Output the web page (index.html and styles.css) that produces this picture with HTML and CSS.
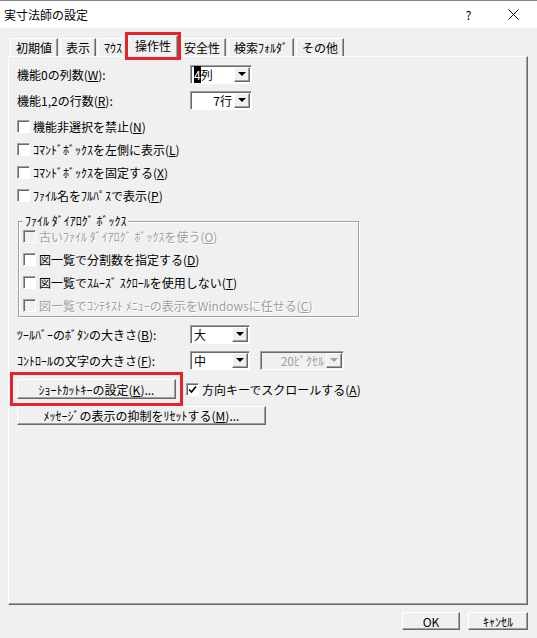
FILE: index.html
```html
<!DOCTYPE html>
<html lang="ja">
<head>
  <meta charset="UTF-8">
  <title>実寸法師の設定</title>
  <link rel="stylesheet" href="styles.css">
</head>
<body>
  <div class="titlebar">
    <span class="title">実寸法師の設定</span>
    <span class="tb-btn">?</span>
    <span class="tb-btn">
      <svg width="11" height="11" viewBox="0 0 11 11"><path d="M0.5 0.5L10.5 10.5M10.5 0.5L0.5 10.5" stroke="#000" stroke-width="1"/></svg>
    </span>
  </div>

  <!-- タブ -->
  <div class="tabs">
    <div class="tab">初期値</div>
    <div class="tab">表示</div>
    <div class="tab">ﾏｳｽ</div>
    <div class="tab active">操作性</div>
    <div class="tab">安全性</div>
    <div class="tab">検索ﾌｫﾙﾀﾞ</div>
    <div class="tab">その他</div>
  </div>

  <div class="panel">
    <div class="field r1">
      <span class="label">機能0の列数(<u>W</u>):</span>
      <div class="select wide"><span class="val"><span class="hl">4</span>列</span><span class="arrow"><i></i></span></div>
    </div>
    <div class="field r2">
      <span class="label">機能1,2の行数(<u>R</u>):</span>
      <div class="select wide"><span class="val right">7行</span><span class="arrow"><i></i></span></div>
    </div>

    <div class="check first"><span class="box"></span>機能非選択を禁止(<u>N</u>)</div>
    <div class="check"><span class="box"></span>ｺﾏﾝﾄﾞﾎﾞｯｸｽを左側に表示(<u>L</u>)</div>
    <div class="check"><span class="box"></span>ｺﾏﾝﾄﾞﾎﾞｯｸｽを固定する(<u>X</u>)</div>
    <div class="check"><span class="box"></span>ﾌｧｲﾙ名をﾌﾙﾊﾟｽで表示(<u>P</u>)</div>

    <div class="group">
      <span class="group-title">ﾌｧｲﾙ ﾀﾞｲｱﾛｸﾞ ﾎﾞｯｸｽ</span>
      <div class="check disabled"><span class="box"></span>古いﾌｧｲﾙ ﾀﾞｲｱﾛｸﾞ ﾎﾞｯｸｽを使う(<u>O</u>)</div>
      <div class="check"><span class="box"></span>図一覧で分割数を指定する(<u>D</u>)</div>
      <div class="check"><span class="box"></span>図一覧でｽﾑｰｽﾞ ｽｸﾛｰﾙを使用しない(<u>T</u>)</div>
      <div class="check disabled"><span class="box"></span>図一覧でｺﾝﾃｷｽﾄ ﾒﾆｭｰの表示をWindowsに任せる(<u>C</u>)</div>
    </div>

    <div class="field r3">
      <span class="label">ﾂｰﾙﾊﾞｰのﾎﾞﾀﾝの大きさ(<u>B</u>):</span>
      <div class="select"><span class="val">大</span><span class="arrow"><i></i></span></div>
    </div>
    <div class="field r4">
      <span class="label">ｺﾝﾄﾛｰﾙの文字の大きさ(<u>F</u>):</span>
      <div class="select"><span class="val">中</span><span class="arrow"><i></i></span></div>
      <div class="select off"><span class="val right">20ﾋﾟｸｾﾙ</span><span class="arrow"><i></i></span></div>
    </div>

    <div class="field r5">
      <button class="btn shortcut">ｼｮｰﾄｶｯﾄｷｰの設定(<u>K</u>)...</button>
      <div class="check on"><span class="box">
        <svg width="9" height="9" viewBox="0 0 9 9"><path d="M1 4.5L3.5 7L8 1.5" fill="none" stroke="#000" stroke-width="1.6"/></svg>
      </span>方向キーでスクロールする(<u>A</u>)</div>
    </div>
    <div class="field r6">
      <button class="btn reset">ﾒｯｾｰｼﾞの表示の抑制をﾘｾｯﾄする(<u>M</u>)...</button>
    </div>
  </div>

  <div class="footer">
    <button class="btn ok">OK</button>
    <button class="btn cancel">ｷｬﾝｾﾙ</button>
  </div>
</body>
</html>
```

FILE: styles.css
```css
body {
  margin: 0;
  background-color: #f0f0f0;
  font-family: "Noto Sans CJK JP", "Liberation Sans", sans-serif;
  font-size: 12px;
  color: #000;
}

u {
  text-underline-offset: 1px;
}

/* タイトルバー */
.titlebar {
  height: 27px;
  background-color: #fff;
  border-top: 1px solid #8a8a8a;
  display: flex;
  align-items: center;
  padding-left: 4px;
  padding-right: 1px;
}
.title {
  flex: 1;
  font-size: 12px;
}
.tb-btn {
  width: 45px;
  height: 27px;
  display: flex;
  align-items: center;
  justify-content: center;
  font-size: 12px;
}

/* タブ */
.tabs {
  height: 28px;
  display: flex;
  align-items: flex-end;
  padding-left: 10px;
  box-sizing: border-box;
}
.tab {
  height: 18px;
  line-height: 17px;
  padding: 0 5px;
  margin-right: 2px;
  box-sizing: border-box;
  border-top: 1px solid #fff;
  border-left: 1px solid #fff;
  border-right: 1px solid #696969;
  box-shadow: inset -1px 0 0 #a0a0a0;
  font-size: 12px;
  white-space: nowrap;
}
.tab.active {
  height: 22px;
  line-height: 20px;
  margin: 0 0 -1px -2px;
  padding: 0 6px;
  background-color: #f0f0f0;
  position: relative;
  z-index: 1;
  outline: 3px solid #e8212b;
}
.tab.active + .tab {
  margin-left: 0;
}

/* パネル */
.panel {
  margin-left: 8px;
  width: 520px;
  height: 549px;
  box-sizing: border-box;
  border-top: 1px solid #fff;
  border-left: 1px solid #fff;
  border-right: 1px solid #696969;
  border-bottom: 1px solid #696969;
  box-shadow: inset -1px -1px 0 #a0a0a0;
  padding-left: 8px;
}

.field {
  display: flex;
  align-items: center;
  height: 20px;
  white-space: nowrap;
}
.field .label {
  width: 173px;
}
.r1 { margin-top: 7px; }
.r2 { margin-top: 6px; }
.r3 { margin-top: 7px; }
.r4 { margin-top: 6px; }
.r5 { margin-top: 9px; }
.r6 { margin-top: 7px; height: 19px; }

/* コンボボックス */
.select {
  display: flex;
  width: 60px;
  height: 19px;
  box-sizing: border-box;
  background-color: #fff;
  border: 1px solid;
  border-color: #a0a0a0 #fff #fff #a0a0a0;
  box-shadow: inset 1px 1px 0 #696969;
}
.select.wide {
  width: 62px;
}
.select .val {
  flex: 1;
  padding: 0 2px 0 3px;
  line-height: 16px;
  margin-top: 1px;
}
.select .val.right {
  text-align: right;
}
.select .hl {
  background-color: #000;
  color: #fff;
}
.select .arrow {
  width: 16px;
  height: 15px;
  margin: 1px 1px 0 0;
  box-sizing: border-box;
  background-color: #f0f0f0;
  border: 1px solid;
  border-color: #fff #696969 #696969 #fff;
  box-shadow: inset -1px -1px 0 #a0a0a0;
  display: flex;
  align-items: center;
  justify-content: center;
}
.select .arrow i {
  width: 0;
  height: 0;
  border-left: 4px solid transparent;
  border-right: 4px solid transparent;
  border-top: 4px solid #000;
}
.select.off {
  width: 84px;
  margin-left: 10px;
  background-color: #f0f0f0;
  color: #a0a0a0;
}
.select.off .arrow i {
  border-top-color: #a0a0a0;
}

/* チェックボックス */
.check {
  display: flex;
  align-items: center;
  height: 20px;
  margin-top: 3px;
  white-space: nowrap;
}
.check.first {
  margin-top: 6px;
}
.check .box {
  width: 13px;
  height: 13px;
  box-sizing: border-box;
  margin-right: 3px;
  background-color: #fff;
  border: 1px solid;
  border-color: #a0a0a0 #fff #fff #a0a0a0;
  box-shadow: inset 1px 1px 0 #696969;
  display: flex;
  align-items: center;
  justify-content: center;
}
.check.disabled {
  color: #a0a0a0;
  text-shadow: 1px 1px 0 #fff;
}
.check.disabled .box {
  background-color: #f0f0f0;
}
.check.on {
  margin: 0 0 0 10px;
}

/* グループボックス */
.group {
  position: relative;
  margin: 16px 0 0 1px;
  width: 341px;
  height: 96px;
  box-sizing: border-box;
  border: 1px solid #a0a0a0;
  box-shadow: inset 1px 1px 0 #fff, 1px 1px 0 #fff;
  padding: 1px 0 0 4px;
}
.group-title {
  position: absolute;
  top: -8px;
  left: 4px;
  padding: 0 2px;
  line-height: 14px;
  background-color: #f0f0f0;
}

/* ボタン */
.btn {
  font-family: inherit;
  font-size: 12px;
  color: #000;
  height: 20px;
  padding: 0;
  background-color: #f0f0f0;
  border: 1px solid;
  border-color: #fff #696969 #696969 #fff;
  box-shadow: inset -1px -1px 0 #a0a0a0;
  white-space: nowrap;
}
.btn.shortcut {
  width: 159px;
  outline: 3px solid #e8212b;
  outline-offset: 4px;
}
.btn.reset {
  width: 249px;
  height: 19px;
}

.footer {
  display: flex;
  justify-content: flex-end;
  gap: 8px;
  padding: 7px 9px 0 0;
}
.btn.ok {
  width: 58px;
  height: 18px;
}
.btn.cancel {
  width: 60px;
  height: 18px;
}
```
